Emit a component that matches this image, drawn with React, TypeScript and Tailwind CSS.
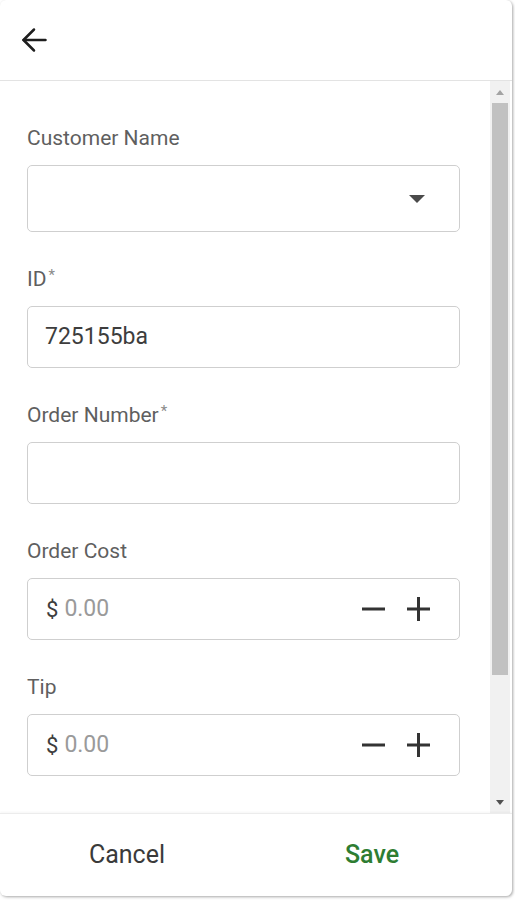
import React from 'react';

const font = { fontFamily: 'Roboto, "Liberation Sans", sans-serif' };

function Label({ text, required }: { text: string; required?: boolean }) {
  return (
    <div className="h-[24px] text-[21px] leading-[24px] text-[#5f5f5f] mb-[15px] flex">
      <span>{text}</span>
      {required && <span className="text-[15px] leading-[16px] text-[#8a8a8a] ml-[2px]">*</span>}
    </div>
  );
}

function MoneyField({ label }: { label: string }) {
  return (
    <div>
      <Label text={label} />
      <div className="h-[62px] border border-[#cfcfcf] rounded-[5px] flex items-center pl-[18px] pr-[28px]">
        <span className="text-[22px] text-[#3d3d3d]">$</span>
        <span className="text-[23px] text-[#9a9a9a] ml-[6px]">0.00</span>
        <div className="ml-auto flex items-center gap-[21px]">
          <svg width="24" height="24" viewBox="0 0 24 24">
            <rect x="0" y="10.5" width="23" height="3" fill="#333" />
          </svg>
          <svg width="24" height="24" viewBox="0 0 24 24">
            <rect x="0" y="10.5" width="23" height="3" fill="#333" />
            <rect x="10" y="0" width="3" height="24" fill="#333" />
          </svg>
        </div>
      </div>
    </div>
  );
}

export default function App() {
  return (
    <div className="bg-white w-[515px] h-[900px]" style={font}>
      <div className="w-[512px] h-[896px] bg-white rounded-[6px] shadow-[1px_1px_3px_rgba(0,0,0,0.35)] flex flex-col overflow-hidden">
        {/* Header */}
        <div className="h-[81px] shrink-0 border-b border-[#e3e3e3] flex items-center pl-[21px]">
          <svg width="26" height="26" viewBox="0 0 26 26" fill="none" stroke="#1e1e1e" strokeWidth="2.5" strokeLinecap="round" strokeLinejoin="round">
            <path d="M24.5 13H2.5" />
            <path d="M13 2.5L2.5 13L13 23.5" />
          </svg>
        </div>

        {/* Body */}
        <div className="flex-1 flex min-h-0">
          <div className="flex-1 overflow-hidden pl-[27px] pr-[30px] pt-[45px] flex flex-col gap-[35px]">
            <div>
              <Label text="Customer Name" />
              <div className="h-[67px] border border-[#cfcfcf] rounded-[5px] flex items-center justify-end pr-[34px]">
                <svg width="16" height="8" viewBox="0 0 16 8">
                  <path d="M0 0H16L8 8Z" fill="#4a4a4a" />
                </svg>
              </div>
            </div>

            <div>
              <Label text="ID" required />
              <div className="h-[62px] border border-[#cfcfcf] rounded-[5px] flex items-center pl-[17px]">
                <span className="text-[23px] text-[#3d3d3d]">725155ba</span>
              </div>
            </div>

            <div>
              <Label text="Order Number" required />
              <div className="h-[62px] border border-[#cfcfcf] rounded-[5px]" />
            </div>

            <MoneyField label="Order Cost" />
            <MoneyField label="Tip" />
          </div>

          {/* Scrollbar */}
          <div className="w-[20px] mr-[2px] bg-[#f1f1f1] flex flex-col items-center">
            <div className="h-[22px] flex items-center justify-center">
              <svg width="8" height="5" viewBox="0 0 8 5">
                <path d="M0 5H8L4 0Z" fill="#a3a3a3" />
              </svg>
            </div>
            <div className="w-[16px] h-[572px] bg-[#c1c1c1]" />
            <div className="flex-1" />
            <div className="h-[22px] flex items-center justify-center">
              <svg width="8" height="5" viewBox="0 0 8 5">
                <path d="M0 0H8L4 5Z" fill="#505050" />
              </svg>
            </div>
          </div>
        </div>

        {/* Footer */}
        <div className="h-[83px] shrink-0 border-t border-[#ececec] shadow-[0_-1px_2px_rgba(0,0,0,0.04)] flex items-center">
          <button className="w-[254px] text-[25px] text-[#3a3a3a]">Cancel</button>
          <button className="w-[236px] text-[25px] font-medium text-[#2e7d32]">Save</button>
        </div>
      </div>
    </div>
  );
}
